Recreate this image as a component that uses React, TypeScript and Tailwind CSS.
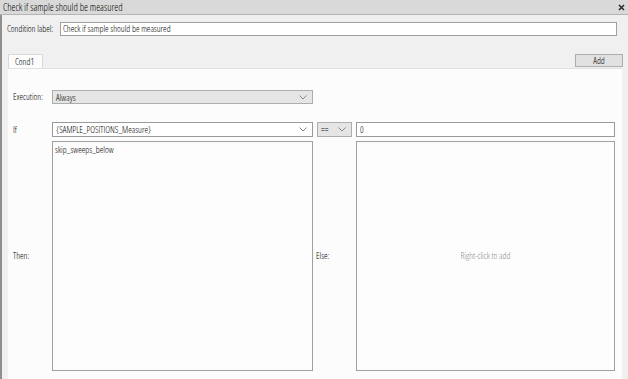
const Chevron = () => (
  <svg width="8" height="5" viewBox="0 0 8 5" className="shrink-0">
    <polyline points="0.5,0.5 4,4 7.5,0.5" fill="none" stroke="#8a8a8a" strokeWidth="1" />
  </svg>
);

const Select = ({ value, gray, className }: { value: string; gray?: boolean; className: string }) => (
  <div
    className={`flex items-center justify-between pl-[3px] pr-[5px] border ${
      gray ? "bg-[#e5e5e5] border-[#adadad]" : "bg-white border-[#9a9a9a]"
    } ${className}`}
  >
    <span className="leading-none">{value}</span>
    <Chevron />
  </div>
);

export default function App() {
  return (
    <div
      className="w-[628px] h-[379px] overflow-hidden bg-[#f0f0f0] text-[9px] text-black font-[360] flex flex-col"
      style={{ fontFamily: '"Open Sans", "Liberation Sans", sans-serif', fontStretch: "condensed" }}
    >
      {/* title bar */}
      <div className="h-[15px] shrink-0 flex items-center justify-between pl-[3px] pr-[3px] bg-[#d9d9d9] border-b border-[#b4b4b4]">
        <span className="text-[10px] leading-none">Check if sample should be measured</span>
        <svg width="7" height="7" viewBox="0 0 7 7">
          <path d="M1 1 L6 6 M6 1 L1 6" stroke="#2b2b2b" strokeWidth="1.6" />
        </svg>
      </div>

      <div className="flex-1 flex flex-col border-l-2 border-[#8e8e8e] pl-[6px] pr-[6px]">
        {/* condition label */}
        <div className="flex items-center mt-[7px] h-[14px]">
          <span className="w-[53px] shrink-0 -ml-px">Condition label:</span>
          <div className="flex-1 h-[14px] mr-[5px] bg-white border border-[#a0a0a0] flex items-center pl-[2px]">
            Check if sample should be measured
          </div>
        </div>

        {/* tabs */}
        <div className="flex items-end justify-between mt-[18px] h-[14px]">
          <div className="w-[35px] h-[14px] bg-[#fcfcfc] border border-b-0 border-[#d9d9d9] flex items-center pl-[6px]">
            Cond1
          </div>
          <div className="w-[48px] h-[13px] mb-px -mr-px bg-[#e1e1e1] border border-[#adadad] flex items-center justify-center">
            Add
          </div>
        </div>

        {/* panel */}
        <div className="flex-1 bg-[#fcfcfc] border-t border-[#e2e2e2] pl-[5px] flex flex-col">
          <div className="flex items-center mt-[21px] h-[14px]">
            <span className="w-[39px] shrink-0">Execution:</span>
            <Select value="Always" gray className="w-[261px] h-[14px]" />
          </div>

          <div className="flex items-center mt-[18px] h-[15px]">
            <span className="w-[39px] shrink-0">If</span>
            <Select value="{SAMPLE_POSITIONS_Measure}" className="w-[261px] h-[15px]" />
            <Select value="==" gray className="w-[35px] h-[15px] ml-[4px]" />
            <div className="w-[259px] h-[15px] ml-[4px] bg-white border border-[#9a9a9a] flex items-center pl-[3px]">
              0
            </div>
          </div>

          <div className="flex items-center mt-[4px] h-[230px]">
            <span className="w-[39px] shrink-0">Then:</span>
            <div className="w-[261px] h-[230px] bg-[#fdfdfd] border border-[#a0a0a0] px-[2px] py-[3px]">
              <div className="leading-none">skip_sweeps_below</div>
            </div>
            <span className="w-[43px] shrink-0 pl-[3px]">Else:</span>
            <div className="w-[259px] h-[230px] bg-[#fdfdfd] border border-[#a0a0a0] flex items-center justify-center text-[#8a8a8a]">
              Right-click to add
            </div>
          </div>
        </div>
      </div>
    </div>
  );
}
